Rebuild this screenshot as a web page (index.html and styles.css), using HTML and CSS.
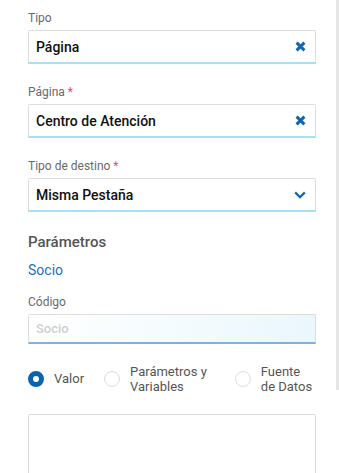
FILE: index.html
```html
<!DOCTYPE html>
<html lang="es">
<head>
  <meta charset="UTF-8" />
  <title>Destino</title>
  <link rel="stylesheet" href="styles.css">
</head>
<body>

  <div class="panel">
    <div class="field">
      <label class="label">Tipo</label>
      <div class="input">
        <span class="value">Página</span>
        <svg class="icon" width="11" height="11" viewBox="0 0 11 11"><path d="M1.6 1.6L9.4 9.4M9.4 1.6L1.6 9.4" stroke="#0f67b1" stroke-width="3" fill="none"/></svg>
      </div>
    </div>

    <div class="field">
      <label class="label">Página <span class="req">*</span></label>
      <div class="input">
        <span class="value">Centro de Atención</span>
        <svg class="icon" width="11" height="11" viewBox="0 0 11 11"><path d="M1.6 1.6L9.4 9.4M9.4 1.6L1.6 9.4" stroke="#0f67b1" stroke-width="3" fill="none"/></svg>
      </div>
    </div>

    <div class="field">
      <label class="label">Tipo de destino <span class="req">*</span></label>
      <div class="input">
        <span class="value">Misma Pestaña</span>
        <svg class="icon" width="12" height="8" viewBox="0 0 12 8"><path d="M1.2 1.4L6 6.2L10.8 1.4" stroke="#0f67b1" stroke-width="2.2" fill="none"/></svg>
      </div>
    </div>

    <h2 class="section">Parámetros</h2>
    <div class="param">Socio</div>

    <div class="field">
      <label class="label">Código</label>
      <div class="input code">
        <span class="placeholder">Socio</span>
      </div>
    </div>

    <div class="radios">
      <div class="radio first">
        <span class="dot on"></span>
        <span class="rtext">Valor</span>
      </div>
      <div class="radio second">
        <span class="dot"></span>
        <span class="rtext">Parámetros y<br>Variables</span>
      </div>
      <div class="radio">
        <span class="dot"></span>
        <span class="rtext">Fuente<br>de Datos</span>
      </div>
    </div>

    <div class="textarea"></div>
  </div>

  <div class="scrollbar"></div>

</body>
</html>
```

FILE: styles.css
```css
html, body {
  margin: 0;
  height: 100%;
  overflow: hidden;
}
body {
  background: #ffffff;
  font-family: Roboto, "Noto Sans", sans-serif;
  color: #222;
  display: flex;
}
.panel {
  width: 288px;
  padding: 10px 20px 0 28px;
}
.field {
  margin-bottom: 20px;
}
.label {
  display: block;
  font-size: 12px;
  line-height: 16px;
  color: #6a6a6a;
  margin-bottom: 4px;
}
.req {
  color: #e4505a;
}
.input {
  height: 34px;
  box-sizing: border-box;
  border: 1px solid #dedede;
  border-bottom: 2px solid #a6e0f5;
  border-radius: 2px 2px 0 0;
  display: flex;
  align-items: center;
  justify-content: space-between;
  padding: 0 9px 0 7px;
}
.value {
  font-size: 14px;
  font-weight: 500;
  color: #111;
}
.icon {
  display: block;
}
.section {
  margin: 0;
  font-size: 15px;
  line-height: 20px;
  font-weight: 500;
  color: #555;
}
.param {
  margin-top: 9px;
  font-size: 14px;
  line-height: 18px;
  color: #1d6fbf;
  margin-bottom: 15px;
}
.input.code {
  height: 30px;
  background: linear-gradient(to right, #ffffff, #eaf7fd);
  border-bottom-color: #7eb2da;
}
.placeholder {
  font-size: 13px;
  font-weight: 500;
  color: #cfcfcf;
}
.field:has(.code) {
  margin-bottom: 19px;
}
.radios {
  display: flex;
  align-items: center;
  height: 31px;
  margin-bottom: 20px;
}
.radio {
  display: flex;
  align-items: center;
}
.radio.first {
  margin-right: 20px;
}
.radio.second {
  margin-right: 28px;
}
.dot {
  width: 16px;
  height: 16px;
  box-sizing: border-box;
  border-radius: 50%;
  border: 1px solid #dcdcdc;
  margin-right: 10px;
}
.dot.on {
  border: 5px solid #0a63ae;
}
.rtext {
  font-size: 13px;
  line-height: 15px;
  color: #555;
}
.textarea {
  height: 80px;
  border: 1px solid #dedede;
  border-radius: 2px;
}
.scrollbar {
  position: absolute;
  top: 0;
  left: 336px;
  width: 3px;
  height: 390px;
  background: #e6e6e6;
}
```
